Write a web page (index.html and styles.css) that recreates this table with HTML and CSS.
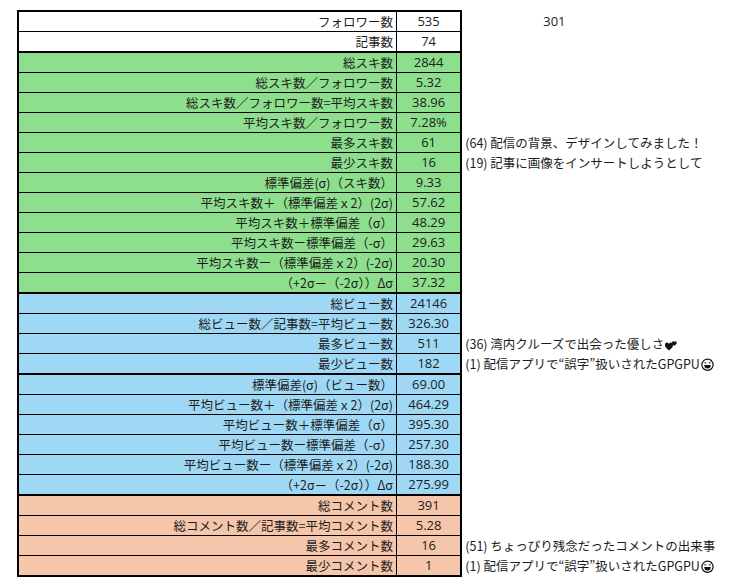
FILE: index.html
```html
<!DOCTYPE html>
<html lang="ja">
<head>
<meta charset="utf-8">
<link rel="stylesheet" href="styles.css">
</head>
<body>
<table class="sheet">
<colgroup><col class="c1"><col class="c2"><col class="c3"></colgroup>
<tr class="w first"><th>フォロワー数</th><td class="v">535</td><td class="n"><span class="extra">301</span></td></tr>
<tr class="w"><th>記事数</th><td class="v">74</td><td class="n"></td></tr>
<tr class="g top"><th>総スキ数</th><td class="v">2844</td><td class="n"></td></tr>
<tr class="g"><th>総スキ数／フォロワー数</th><td class="v">5.32</td><td class="n"></td></tr>
<tr class="g"><th>総スキ数／フォロワー数=平均スキ数</th><td class="v">38.96</td><td class="n"></td></tr>
<tr class="g"><th>平均スキ数／フォロワー数</th><td class="v">7.28%</td><td class="n"></td></tr>
<tr class="g"><th>最多スキ数</th><td class="v">61</td><td class="n">(64) 配信の背景、デザインしてみました！</td></tr>
<tr class="g"><th>最少スキ数</th><td class="v">16</td><td class="n">(19) 記事に画像をインサートしようとして</td></tr>
<tr class="g"><th>標準偏差(σ)（スキ数）</th><td class="v">9.33</td><td class="n"></td></tr>
<tr class="g"><th>平均スキ数＋（標準偏差ｘ2）(2σ)</th><td class="v">57.62</td><td class="n"></td></tr>
<tr class="g"><th>平均スキ数＋標準偏差（σ）</th><td class="v">48.29</td><td class="n"></td></tr>
<tr class="g"><th>平均スキ数ー標準偏差（-σ）</th><td class="v">29.63</td><td class="n"></td></tr>
<tr class="g"><th>平均スキ数ー（標準偏差ｘ2）(-2σ)</th><td class="v">20.30</td><td class="n"></td></tr>
<tr class="g"><th>（+2σ－（-2σ））Δσ</th><td class="v">37.32</td><td class="n"></td></tr>
<tr class="b top"><th>総ビュー数</th><td class="v">24146</td><td class="n"></td></tr>
<tr class="b"><th>総ビュー数／記事数=平均ビュー数</th><td class="v">326.30</td><td class="n"></td></tr>
<tr class="b"><th>最多ビュー数</th><td class="v">511</td><td class="n">(36) 湾内クルーズで出会った優しさ<svg class="ico" width="12" height="11" viewBox="0 0 12 11"><path d="M4 10.5 C1 8 0 6.5 0 5 C0 3.4 1 2.6 2 2.6 C3 2.6 3.7 3.3 4 4 C4.3 3.3 5 2.6 6 2.6 C7 2.6 8 3.4 8 5 C8 6.5 7 8 4 10.5Z" fill="#111"/><path d="M9.3 6 C7.6 4.6 7 3.8 7 2.8 C7 1.9 7.6 1.3 8.2 1.3 C8.8 1.3 9.1 1.7 9.3 2.1 C9.5 1.7 9.9 1.3 10.5 1.3 C11.1 1.3 11.7 1.9 11.7 2.8 C11.7 3.8 11 4.6 9.3 6Z" fill="#111"/></svg></td></tr>
<tr class="b"><th>最少ビュー数</th><td class="v">182</td><td class="n">(1) 配信アプリで“誤字”扱いされたGPGPU<svg class="ico" width="13" height="13" viewBox="0 0 13 13"><circle cx="6.5" cy="6.8" r="5.6" fill="none" stroke="#111" stroke-width="1.2"/><path d="M3.4 5.2 Q4.3 4.2 5.2 5.2 M7.8 5.2 Q8.7 4.2 9.6 5.2" fill="none" stroke="#111" stroke-width="1.1"/><path d="M3.2 7 H9.8 Q9.6 10.6 6.5 10.6 Q3.4 10.6 3.2 7Z" fill="#111"/><path d="M10.3 1 Q11.6 2.6 10.9 3.4 Q10 3.6 10.3 1Z" fill="#111"/></svg></td></tr>
<tr class="b top"><th>標準偏差(σ)（ビュー数）</th><td class="v">69.00</td><td class="n"></td></tr>
<tr class="b"><th>平均ビュー数＋（標準偏差ｘ2）(2σ)</th><td class="v">464.29</td><td class="n"></td></tr>
<tr class="b"><th>平均ビュー数＋標準偏差（σ）</th><td class="v">395.30</td><td class="n"></td></tr>
<tr class="b"><th>平均ビュー数ー標準偏差（-σ）</th><td class="v">257.30</td><td class="n"></td></tr>
<tr class="b"><th>平均ビュー数ー（標準偏差ｘ2）(-2σ)</th><td class="v">188.30</td><td class="n"></td></tr>
<tr class="b"><th>（+2σ－（-2σ））Δσ</th><td class="v">275.99</td><td class="n"></td></tr>
<tr class="p top"><th>総コメント数</th><td class="v">391</td><td class="n"></td></tr>
<tr class="p"><th>総コメント数／記事数=平均コメント数</th><td class="v">5.28</td><td class="n"></td></tr>
<tr class="p"><th>最多コメント数</th><td class="v">16</td><td class="n">(51) ちょっぴり残念だったコメントの出来事</td></tr>
<tr class="p last"><th>最少コメント数</th><td class="v">1</td><td class="n">(1) 配信アプリで“誤字”扱いされたGPGPU<svg class="ico" width="13" height="13" viewBox="0 0 13 13"><circle cx="6.5" cy="6.8" r="5.6" fill="none" stroke="#111" stroke-width="1.2"/><path d="M3.4 5.2 Q4.3 4.2 5.2 5.2 M7.8 5.2 Q8.7 4.2 9.6 5.2" fill="none" stroke="#111" stroke-width="1.1"/><path d="M3.2 7 H9.8 Q9.6 10.6 6.5 10.6 Q3.4 10.6 3.2 7Z" fill="#111"/><path d="M10.3 1 Q11.6 2.6 10.9 3.4 Q10 3.6 10.3 1Z" fill="#111"/></svg></td></tr>
</table>
</body>
</html>
```

FILE: styles.css
```css
html, body {
  margin: 0;
  padding: 0;
  background: #fff;
}
body {
  font-family: "Noto Sans CJK JP", "Noto Sans", sans-serif;
  font-size: 12.5px;
  color: #1c1c1c;
}
.sheet {
  border-collapse: collapse;
  table-layout: fixed;
  margin: 10px 0 0 17px;
}
.c1 { width: 380px; }
.c2 { width: 65px; }
.c3 { width: 282px; }
.sheet th, .sheet td {
  height: 19px;
  padding: 0;
  line-height: 19px;
  white-space: nowrap;
  overflow: visible;
}
.sheet th {
  font-weight: normal;
  text-align: right;
  padding-right: 3px;
  border-left: 2px solid #000;
  border-bottom: 1px solid #000;
  border-right: 1px solid #000;
}
.sheet .v {
  text-align: center;
  font-family: "Open Sans", "Noto Sans CJK JP", sans-serif;
  font-size: 13px;
  border-right: 2px solid #000;
  border-bottom: 1px solid #000;
}
.sheet .n {
  padding-left: 3px;
  text-align: left;
  border: none;
}
.first th, .first .v { border-top: 2px solid #000; }
.top th, .top .v { border-top: 2px solid #000; }
.last th, .last .v { border-bottom: 2px solid #000; }
.w th, .w .v { background: #fff; }
.g th, .g .v { background: #8ddf8d; }
.b th, .b .v { background: #9fd8f5; }
.p th, .p .v { background: #f6c6aa; }
.extra {
  display: inline-block;
  margin-left: 78px;
  font-family: "Open Sans", sans-serif;
  font-size: 13px;
}
.ico {
  vertical-align: -2px;
  margin-left: 1px;
}
```
